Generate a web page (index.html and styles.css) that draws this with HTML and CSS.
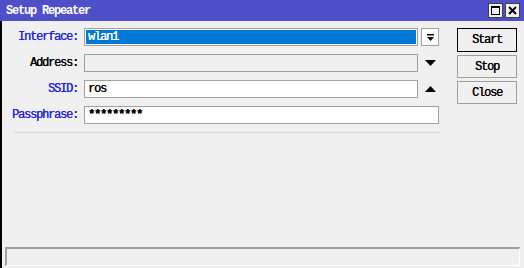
FILE: index.html
```html
<!DOCTYPE html>
<html lang="en">
<head>
    <meta charset="UTF-8">
    <title>Setup Repeater</title>
    <link rel="stylesheet" href="styles.css">
</head>
<body>
    <div class="window">
        <!-- Title bar -->
        <header class="title_bar">
            <span class="title">Setup Repeater</span>
            <div class="title_buttons">
                <span class="tb_btn">
                    <svg width="13" height="13" viewBox="0 0 13 13"><rect x="2.5" y="2.5" width="8" height="8" fill="none" stroke="#000" stroke-width="1"/><line x1="2" y1="3" x2="11" y2="3" stroke="#000" stroke-width="2"/></svg>
                </span>
                <span class="tb_btn">
                    <svg width="13" height="13" viewBox="0 0 13 13"><path d="M3 3 L10 10 M10 3 L3 10" stroke="#000" stroke-width="2"/></svg>
                </span>
            </div>
        </header>

        <div class="content">
            <!-- Form -->
            <section class="form">
                <div class="row">
                    <label class="label blue">Interface:</label>
                    <div class="field selected">wlan1</div>
                    <span class="drop_btn">
                        <svg width="9" height="9" viewBox="0 0 9 9"><rect x="1" y="1" width="7" height="1.5" fill="#000"/><path d="M1 4 L8 4 L4.5 8 Z" fill="#000"/></svg>
                    </span>
                </div>
                <div class="row">
                    <label class="label">Address:</label>
                    <div class="field disabled"></div>
                    <span class="arrow">
                        <svg width="11" height="7" viewBox="0 0 11 7"><path d="M0 0 L11 0 L5.5 6 Z" fill="#000"/></svg>
                    </span>
                </div>
                <div class="row">
                    <label class="label blue">SSID:</label>
                    <div class="field">ros</div>
                    <span class="arrow">
                        <svg width="11" height="7" viewBox="0 0 11 7"><path d="M0 6 L11 6 L5.5 0 Z" fill="#000"/></svg>
                    </span>
                </div>
                <div class="row">
                    <label class="label blue">Passphrase:</label>
                    <div class="field wide bold">*********</div>
                </div>
                <div class="separator"></div>
            </section>

            <!-- Buttons -->
            <section class="buttons">
                <button class="btn default">Start</button>
                <button class="btn">Stop</button>
                <button class="btn">Close</button>
            </section>
        </div>

        <!-- Status bar -->
        <footer class="status_bar"></footer>
    </div>
</body>
</html>
```

FILE: styles.css
```css
body {
    margin: 0;
    padding: 0;
    font-family: "Liberation Mono", monospace;
    font-size: 12px;
    letter-spacing: -1.2px;
    color: #000;
    background-color: #f0f0f0;
}

.window {
    width: 524px;
    height: 268px;
    box-sizing: border-box;
    border-left: 2px solid #000;
    background-color: #f0f0f0;
    display: flex;
    flex-direction: column;
}

.title_bar {
    height: 21px;
    background-color: #4f4fc9;
    color: #fff;
    display: flex;
    align-items: center;
    justify-content: space-between;
    padding: 0 4px 0 4px;
    margin-left: -2px;
}

.title {
    padding-left: 2px;
    font-weight: bold;
}

.title_buttons {
    display: flex;
    gap: 2px;
}

.tb_btn {
    width: 15px;
    height: 15px;
    box-sizing: border-box;
    background-color: #f0f0f0;
    border: 1px solid #404040;
    display: flex;
    align-items: center;
    justify-content: center;
}

.content {
    display: flex;
    padding-top: 7px;
}

.form {
    width: 437px;
}

.row {
    display: flex;
    align-items: center;
    height: 18px;
    margin-bottom: 8px;
}

.label {
    width: 78px;
    text-align: right;
    padding-right: 2px;
    box-sizing: border-box;
    flex-shrink: 0;
    text-shadow: 0.3px 0 0 currentColor;
}

.blue {
    color: #2525e0;
}

.field {
    width: 335px;
    height: 18px;
    box-sizing: border-box;
    border: 1px solid #a0a0a0;
    background-color: #fff;
    padding-left: 3px;
    line-height: 16px;
    margin-left: 4px;
    text-shadow: 0.3px 0 0 currentColor;
}

.field.selected {
    background-color: #0078d7;
    color: #fff;
    box-shadow: inset 0 0 0 1px #fff;
}

.field.disabled {
    background-color: #f0f0f0;
}

.field.wide {
    width: 355px;
}

.bold {
    font-weight: bold;
}

.drop_btn {
    width: 18px;
    height: 18px;
    box-sizing: border-box;
    margin-left: 3px;
    border: 1px solid #a0a0a0;
    background-color: #fff;
    display: flex;
    align-items: center;
    justify-content: center;
}

.arrow {
    width: 18px;
    margin-left: 3px;
    display: flex;
    justify-content: center;
}

.separator {
    margin-left: 12px;
    width: 426px;
    border-top: 1px solid #d9d9d9;
    margin-top: 1px;
}

.buttons {
    display: flex;
    flex-direction: column;
    gap: 3px;
    margin-left: 18px;
}

.btn {
    width: 60px;
    height: 23px;
    font-family: "Liberation Mono", monospace;
    font-size: 12px;
    letter-spacing: -1.2px;
    background-color: #f0f0f0;
    border: 1px solid #a0a0a0;
    padding: 0;
    color: #000;
    text-shadow: 0.3px 0 0 currentColor;
}

.btn.default {
    height: 24px;
    border: 1px solid #000;
}

.status_bar {
    margin: auto 4px 2px 3px;
    height: 19px;
    box-sizing: border-box;
    border-top: 2px solid #a0a0a0;
    border-left: 2px solid #a0a0a0;
    border-bottom: 1px solid #fff;
    border-right: 1px solid #fff;
}
```
